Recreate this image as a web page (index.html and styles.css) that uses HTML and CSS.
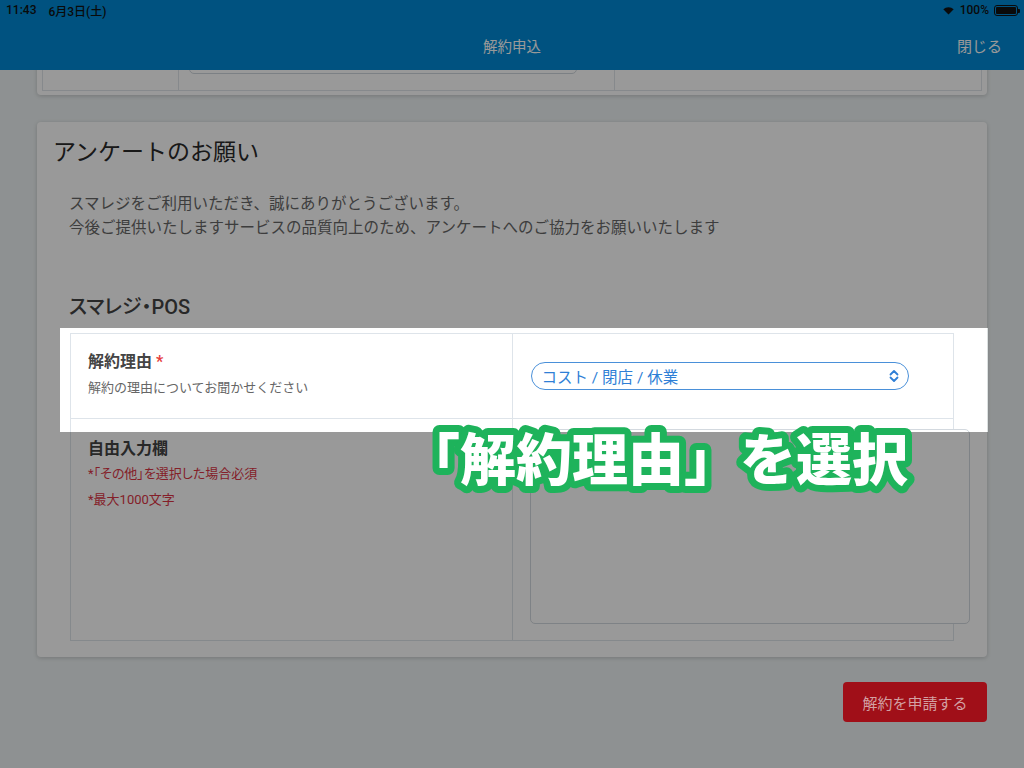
FILE: index.html
```html
<!DOCTYPE html>
<html lang="ja">
<head>
  <meta charset="UTF-8" />
  <meta name="viewport" content="width=device-width, initial-scale=1.0" />
  <title>解約申込</title>
  <link rel="stylesheet" href="styles.css">
</head>
<body>
  <header class="appbar">
    <div class="status">
      <span class="status-time">11:43</span>
      <span class="status-date">6月3日(土)</span>
      <span class="status-right">
        <svg class="wifi" width="11" height="9" viewBox="0 0 11 9">
          <path d="M5.5 8.6 L0.3 3.2 A7.6 7.6 0 0 1 10.7 3.2 Z" fill="#111"/>
        </svg>
        <span class="battery-text">100%</span>
        <span class="battery"><span class="battery-level"></span></span>
      </span>
    </div>
    <div class="navbar">
      <span></span>
      <span class="nav-title">解約申込</span>
      <a class="nav-close">閉じる</a>
    </div>
  </header>

  <main class="content">
    <div class="card card-prev">
      <div class="prev-row">
        <div class="prev-cell prev-label"></div>
        <div class="prev-cell"><div class="prev-input"></div></div>
        <div class="prev-cell"></div>
      </div>
    </div>

    <section class="card">
      <h1 class="card-title">アンケートのお願い</h1>
      <p class="lead">スマレジをご利用いただき、誠にありがとうございます。<br>今後ご提供いたしますサービスの品質向上のため、アンケートへのご協力をお願いいたします</p>

      <div class="survey">
        <h2 class="service">スマレジ・POS</h2>
        <div class="form-table">
          <div class="form-cell form-reason">
            <div class="field-label">解約理由 <span class="required">*</span></div>
            <div class="field-help">解約の理由についてお聞かせください</div>
          </div>
          <div class="form-cell form-select">
            <div class="select">
              <span>コスト / 閉店 / 休業</span>
              <svg width="10" height="14" viewBox="0 0 10 14">
                <path d="M1.5 5.5 L5 2 L8.5 5.5 M1.5 8.5 L5 12 L8.5 8.5" fill="none" stroke="#2f7fd6" stroke-width="1.8" stroke-linecap="round" stroke-linejoin="round"/>
              </svg>
            </div>
          </div>
          <div class="form-cell form-free">
            <div class="field-label">自由入力欄</div>
            <p class="field-note">*「その他」を選択した場合必須</p>
            <p class="field-note note-gap">*最大1000文字</p>
          </div>
          <div class="form-cell form-text">
            <textarea class="free-text"></textarea>
          </div>
        </div>
      </div>
    </section>

    <div class="actions">
      <button class="btn-apply">解約を申請する</button>
    </div>
  </main>

  <div class="spotlight"></div>
  <svg class="caption" width="540" height="90" viewBox="0 0 540 90">
    <text x="4" y="70">「解約理由」を選択</text>
  </svg>
</body>
</html>
```

FILE: styles.css
```css
* {
  box-sizing: border-box;
}

body {
  margin: 0;
  width: 1024px;
  height: 768px;
  overflow: hidden;
  background: #edf2f3;
  font-family: Roboto, "Noto Sans CJK JP", sans-serif;
  color: #333;
}

/* header */
.appbar {
  height: 70px;
  background: #0089d5;
  color: #fff;
}

.status {
  height: 20px;
  display: flex;
  align-items: center;
  padding: 0 6px;
  font-size: 12px;
  font-weight: 500;
  color: #111;
}

.status-date {
  margin-left: 12px;
}

.status-right {
  margin-left: auto;
  display: flex;
  align-items: center;
  gap: 4px;
}

.battery-text {
  margin-left: 2px;
}

.battery {
  width: 24px;
  height: 11px;
  border: 1px solid #111;
  border-radius: 3px;
  padding: 1px;
  margin-left: 1px;
  position: relative;
}

.battery::after {
  content: "";
  position: absolute;
  right: -3px;
  top: 3px;
  width: 2px;
  height: 4px;
  background: #111;
  border-radius: 0 1px 1px 0;
}

.battery-level {
  display: block;
  height: 100%;
  background: #111;
  border-radius: 1px;
}

.navbar {
  height: 50px;
  display: grid;
  grid-template-columns: 1fr auto 1fr;
  align-items: center;
  padding: 0 22px 0 22px;
}

.nav-title {
  font-size: 14.5px;
}

.nav-close {
  justify-self: end;
  font-size: 15px;
}

/* content */
.content {
  height: 698px;
  overflow: hidden;
  padding: 0 37px;
}

.card {
  background: #fff;
  border-radius: 4px;
  box-shadow: 0 1px 4px rgba(0,0,0,0.18);
}

.card-prev {
  margin-top: -54px;
  padding: 5px 5px 4px 5px;
}

.prev-row {
  display: grid;
  grid-template-columns: 135px 436px 1fr;
  border: 1px solid #dfe5ea;
}

.prev-cell {
  padding: 16px 10px;
  border-left: 1px solid #dfe5ea;
}

.prev-label {
  border-left: none;
}

.prev-input {
  width: 388px;
  height: 36px;
  border: 1px solid #cfd6dc;
  border-radius: 5px;
}

.card-prev + .card {
  margin-top: 27px;
}

section.card {
  padding: 16px 16px 16px 16px;
}

.card-title {
  margin: 0;
  font-size: 23px;
  line-height: 30px;
  font-weight: 400;
  color: #2a2a2a;
}

.lead {
  margin: 24px 0 0 16px;
  font-size: 15.5px;
  line-height: 24px;
  color: #676767;
}

.survey {
  margin: 0 17px 0 17px;
}

.service {
  margin: 54px 0 0 -1px;
  font-size: 20px;
  line-height: 26px;
  font-weight: 500;
  color: #444;
  font-feature-settings: "palt";
}

.form-table {
  margin-top: 13px;
  display: grid;
  grid-template-columns: 1fr 1fr;
  border-top: 1px solid #dee4ea;
  border-left: 1px solid #dee4ea;
}

.form-cell {
  min-width: 0;
  border-right: 1px solid #dee4ea;
  border-bottom: 1px solid #dee4ea;
  padding: 17px 17px 19px 17px;
}

.form-reason {
  padding-bottom: 21px;
}

.field-label {
  font-size: 16px;
  line-height: 22px;
  font-weight: 700;
  color: #444;
}

.required {
  color: #e53e3e;
}

.field-help {
  margin-top: 6px;
  font-size: 13px;
  line-height: 18px;
  color: #666;
}

.form-select {
  display: flex;
  align-items: center;
  padding: 0 0 0 18px;
}

.select {
  width: 378px;
  height: 28px;
  border: 1px solid #4a90d9;
  border-radius: 14px;
  display: flex;
  align-items: center;
  justify-content: space-between;
  padding: 0 9px 0 10px;
  font-size: 15.5px;
  color: #2f7fd6;
}

.form-free {
  padding-top: 19px;
}

.field-note {
  margin: 5px 0 0 0;
  font-size: 13px;
  line-height: 18px;
  color: #dc3545;
  font-feature-settings: "palt";
}

.note-gap {
  margin-top: 8px;
}

.form-text {
  padding: 10px 0 16px 17px;
}

.free-text {
  display: block;
  width: 440px;
  height: 195px;
  border: 1px solid #d3d9df;
  border-radius: 5px;
  resize: none;
  background: #fff;
}

.actions {
  display: flex;
  justify-content: flex-end;
  margin-top: 25px;
}

.btn-apply {
  position: relative;
  z-index: 11;
  height: 40px;
  width: 144px;
  border: none;
  border-radius: 4px;
  background: #a00f18;
  color: #d3a0a3;
  font-family: "Noto Sans CJK JP", sans-serif;
  font-size: 15px;
}

/* tutorial overlay */
.spotlight {
  position: absolute;
  left: 60px;
  top: 328px;
  width: 928px;
  height: 104px;
  z-index: 10;
  box-shadow: 0 0 0 2000px rgba(0,0,0,0.4);
}

.caption {
  position: absolute;
  left: 400px;
  top: 410px;
  z-index: 11;
  overflow: visible;
}

.caption text {
  font-family: "Noto Sans CJK JP", sans-serif;
  font-size: 56px;
  font-weight: 900;
  fill: #fff;
  stroke: #1eb35b;
  stroke-width: 14px;
  stroke-linejoin: round;
  paint-order: stroke fill;
}
```
